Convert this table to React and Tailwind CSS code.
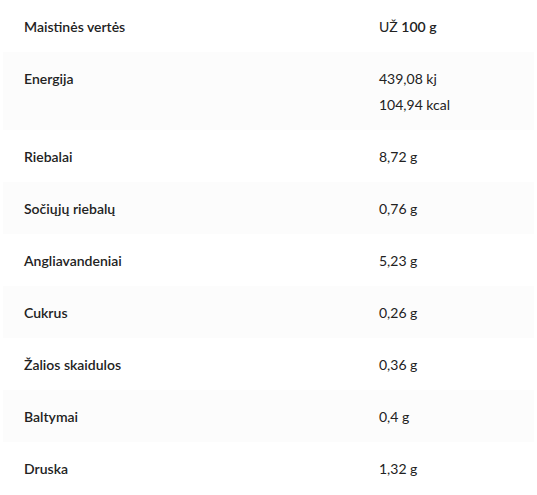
import React from "react";

const rows = [
  { label: "Energija", value: ["439,08 kj", "104,94 kcal"] },
  { label: "Riebalai", value: ["8,72 g"] },
  { label: "Sočiųjų riebalų", value: ["0,76 g"] },
  { label: "Angliavandeniai", value: ["5,23 g"] },
  { label: "Cukrus", value: ["0,26 g"] },
  { label: "Žalios skaidulos", value: ["0,36 g"] },
  { label: "Baltymai", value: ["0,4 g"] },
  { label: "Druska", value: ["1,32 g"] },
];

export default function App() {
  return (
    <div className="w-[537px] min-h-[495px] bg-white px-[3px] text-[14px] text-[#222] font-['Lato','Noto_Sans',sans-serif]">
      <table className="w-full table-fixed border-collapse">
        <colgroup>
          <col className="w-[376px]" />
          <col />
        </colgroup>
        <thead>
          <tr>
            <th className="pl-[21px] pt-[14px] pb-[12px] text-left font-semibold leading-[26px]">Maistinės vertės</th>
            <th className="pt-[14px] pb-[12px] text-left font-normal leading-[26px]">
              UŽ <span className="font-semibold">100 g</span>
            </th>
          </tr>
        </thead>
        <tbody>
          {rows.map((r, i) => (
            <tr key={r.label} className={i % 2 === 0 ? "bg-[#fcfcfc]" : "bg-white"}>
              <td className="pl-[21px] pt-[14px] pb-[12px] align-top font-semibold leading-[26px]">{r.label}</td>
              <td className="pt-[14px] pb-[12px] align-top leading-[26px]">
                {r.value.map((v) => (
                  <div key={v}>{v}</div>
                ))}
              </td>
            </tr>
          ))}
        </tbody>
      </table>
    </div>
  );
}
